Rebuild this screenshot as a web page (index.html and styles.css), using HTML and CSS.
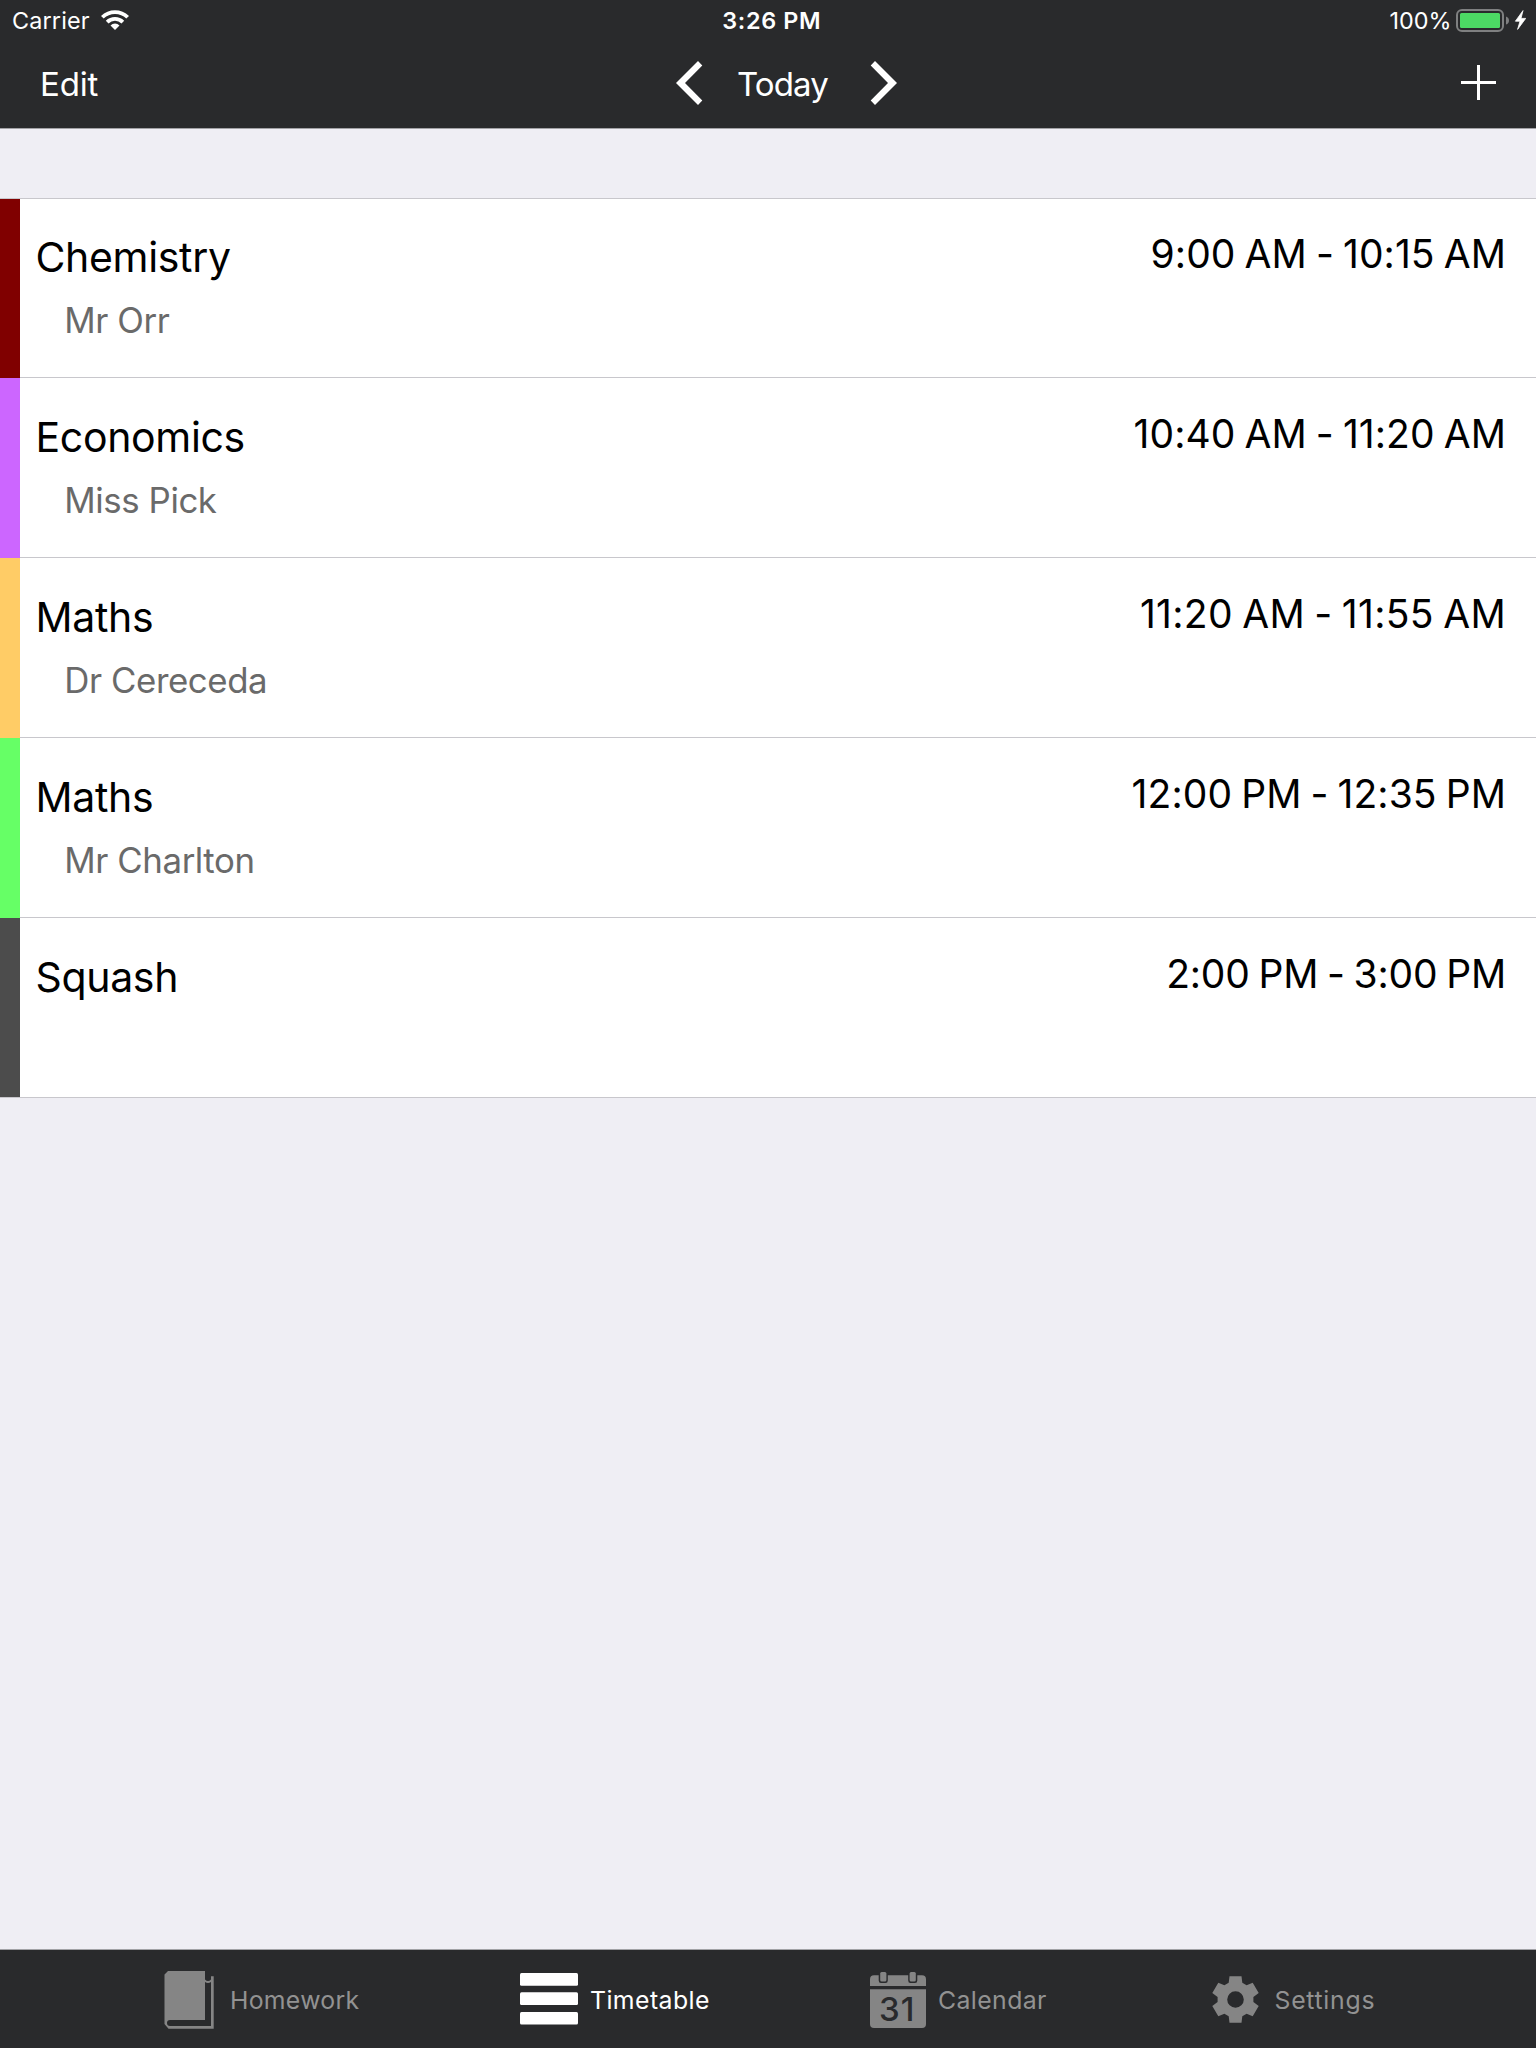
FILE: index.html
```html
<!DOCTYPE html>
<html lang="en">
<head>
<meta charset="utf-8">
<title>Timetable</title>
<link rel="stylesheet" href="styles.css">
</head>
<body>
<div class="app">
  <header class="header">
    <div class="status">
      <div class="status-left">
        <span class="carrier">Carrier</span>
        <svg class="wifi" width="28" height="20" viewBox="0 0 28 20">
          <path d="M0 5.9A20 20 0 0 1 28 5.9L25.3 8.6A16.2 16.2 0 0 0 2.7 8.6Z"/>
          <path d="M4.8 10.7A13.2 13.2 0 0 1 23.2 10.7L20.5 13.4A9.4 9.4 0 0 0 7.5 13.4Z"/>
          <path d="M9.5 15.4A6.5 6.5 0 0 1 18.5 15.4L14 20Z"/>
        </svg>
      </div>
      <span class="clock">3:26 PM</span>
      <div class="status-right">
        <span>100%</span>
        <svg class="battery" width="70" height="24" viewBox="0 0 70 24">
          <rect class="battery-case" x="1" y="1" width="46" height="21" rx="5"/>
          <rect class="battery-level" x="4" y="4" width="40" height="15" rx="1.5"/>
          <path class="battery-tip" d="M50 7.5Q53 8.5 53 11.5T50 15.5Z"/>
          <path class="bolt" d="M67 1.6L59.4 12.2H64L61.6 20.4L69.7 9.4H65Z"/>
        </svg>
      </div>
    </div>
    <nav class="nav">
      <span class="edit">Edit</span>
      <div class="day">
        <svg width="27" height="44" viewBox="0 0 27 44"><path d="M22 0L26.3 4.5L9 22L26.3 39.5L22 44L0 22Z"/></svg>
        <span class="day-name">Today</span>
        <svg width="27" height="44" viewBox="0 0 27 44"><path d="M5 0L.7 4.5L18 22L.7 39.5L5 44L27 22Z"/></svg>
      </div>
      <svg class="plus" width="35" height="35" viewBox="0 0 35 35"><path d="M0 16H16V0H19V16H35V19H19V35H16V19H0Z"/></svg>
    </nav>
  </header>

  <main class="content">
    <ul class="lessons">
      <li class="lesson">
        <span class="stripe chemistry"></span>
        <div class="body">
          <div class="info"><div class="subject">Chemistry</div><div class="teacher">Mr Orr</div></div>
          <div class="time">9:00 AM - 10:15 AM</div>
        </div>
      </li>
      <li class="lesson">
        <span class="stripe economics"></span>
        <div class="body">
          <div class="info"><div class="subject">Economics</div><div class="teacher">Miss Pick</div></div>
          <div class="time">10:40 AM - 11:20 AM</div>
        </div>
      </li>
      <li class="lesson">
        <span class="stripe maths-a"></span>
        <div class="body">
          <div class="info"><div class="subject">Maths</div><div class="teacher">Dr Cereceda</div></div>
          <div class="time loose">11:20 AM - 11:55 AM</div>
        </div>
      </li>
      <li class="lesson">
        <span class="stripe maths-b"></span>
        <div class="body">
          <div class="info"><div class="subject">Maths</div><div class="teacher">Mr Charlton</div></div>
          <div class="time">12:00 PM - 12:35 PM</div>
        </div>
      </li>
      <li class="lesson">
        <span class="stripe squash"></span>
        <div class="body">
          <div class="info"><div class="subject">Squash</div></div>
          <div class="time tight">2:00 PM - 3:00 PM</div>
        </div>
      </li>
    </ul>
  </main>

  <footer class="tabs">
    <div class="tab homework">
      <svg width="50" height="58" viewBox="0 0 50 58"><path fill-rule="evenodd" d="M4 0H41V8.5Q44 11.5 47 8.5V5.3H49.7V57.7H4.5L.5 53V3.5ZM41 11Q44 13 47 11V55H6A3 3 0 0 1 6 49H41Z"/></svg>
      <span>Homework</span>
    </div>
    <div class="tab timetable">
      <svg width="58" height="52" viewBox="0 0 58 52"><rect width="58" height="12.7" rx="1.5"/><rect y="19.3" width="58" height="12.7" rx="1.5"/><rect y="38.9" width="58" height="12.7" rx="1.5"/></svg>
      <span>Timetable</span>
    </div>
    <div class="tab calendar">
      <svg width="56" height="56" viewBox="0 0 56 56">
        <path d="M4 3.3H8.7V8.5Q8.7 11 11 11H15.5Q17.8 11 17.8 8.5V3.3H38.2V8.5Q38.2 11 40.5 11H45Q47.3 11 47.3 8.5V3.3H52Q56 3.3 56 7.3V14H0V7.3Q0 3.3 4 3.3Z"/>
        <rect x="10.2" width="6.2" height="9.6" rx="1.5"/><rect x="39.6" width="6.2" height="9.6" rx="1.5"/>
        <path d="M0 17.3H56V52Q56 56 52 56H4Q0 56 0 52Z"/>
        <text class="date" x="9" y="48.7">31</text>
      </svg>
      <span>Calendar</span>
    </div>
    <div class="tab settings">
      <svg width="47" height="47" viewBox="-23.5 -23.5 47 47"><path fill-rule="evenodd" d="M-6.8-16.8L-6-23.3L6-23.3L6.8-16.8L11.1-14.3L17.2-16.8L23.2-6.5L17.9-2.5L17.9 2.5L23.2 6.5L17.2 16.8L11.1 14.3L6.8 16.8L6 23.3L-6 23.3L-6.8 16.8L-11.1 14.3L-17.2 16.8L-23.2 6.5L-17.9 2.5L-17.9-2.5L-23.2-6.5L-17.2-16.8L-11.1-14.3ZM-8.3 0A8.3 8.3 0 0 0 8.3 0A8.3 8.3 0 0 0-8.3 0Z"/></svg>
      <span>Settings</span>
    </div>
  </footer>
</div>
</body>
</html>
```
FILE: styles.css
```css
* { box-sizing: border-box; }
body { margin: 0; font-family: Inter, "Liberation Sans", sans-serif; color: #000; }
svg { display: block; flex: none; fill: currentColor; }
span { white-space: nowrap; }

.app { width: 1536px; height: 2048px; display: flex; flex-direction: column; background: #efeef4; overflow: hidden; }

.header { height: 129px; background: #292a2c; color: #fff; border-bottom: 1px solid #a2a2a6; }
.status { height: 40px; display: flex; font-size: 23.4px; line-height: 41px; }
.status-left { width: 722.3px; padding-left: 12px; display: flex; }
.carrier { letter-spacing: .15px; }
.wifi { margin: 10px 0 0 11px; }
.clock { font-weight: 600; letter-spacing: .65px; }
.status-right { margin-left: auto; padding-right: 10px; display: flex; }
.battery { margin: 9px 0 0 4.5px; }
.battery-case { fill: none; stroke: #7f8081; stroke-width: 2; }
.battery-level { fill: #4cd964; }
.battery-tip { fill: #7f8081; }
.bolt { stroke: #fff; stroke-width: .8; }

.nav { height: 88px; padding: 0 40px; display: flex; align-items: center; font-size: 33px; line-height: 40px; }
.edit { width: 636px; letter-spacing: -.2px; }
.day { display: flex; align-items: center; width: 221px; }
.day svg { margin-top: -2px; }
.day-name { width: 166.5px; padding-left: 34px; letter-spacing: -.9px; }
.plus { margin: -3px 0 0 auto; }

.content { flex: 1; padding-top: 69px; }
.lessons { margin: 0; padding: 0; list-style: none; }
.lesson { height: 180px; display: flex; background: #fff; }
.lesson:first-child { border-top: 1px solid #c8c7cc; }
.lesson:last-child { border-bottom: 1px solid #c8c7cc; }
.stripe { width: 20px; }
.body { flex: 1; display: flex; justify-content: space-between; padding: 34px 30px 0 15.5px; border-bottom: 1px solid #c8c7cc; }
.lesson:first-child .body { padding-top: 33px; }
.lesson:last-child .body { border-bottom: 0; }
.subject { font-size: 41px; line-height: 50px; letter-spacing: -.33px; }
.teacher { margin: 16px 0 0 28.8px; font-size: 34.8px; line-height: 44px; letter-spacing: -.42px; color: #6a6a6a; }
.time { margin-top: -2px; font-size: 39px; line-height: 48px; letter-spacing: .08px; word-spacing: -2px; white-space: nowrap; }
.time.tight { letter-spacing: -.18px; }
.time.loose { letter-spacing: .33px; }
.chemistry { background: #800000; }
.economics { background: #cc66ff; }
.maths-a { background: #ffcc66; }
.maths-b { background: #66ff66; }
.squash { background: #4c4c4c; }

.tabs { height: 99px; padding-left: 164px; display: grid; grid-template-columns: 356px 350px 342px 1fr; background: #292a2c; border-top: 1px solid #a2a2a6; font-size: 24.8px; line-height: 100px; color: #929292; }
.tab { display: flex; align-items: flex-start; }
.tab svg { color: #858585; }
.homework { gap: 16px; letter-spacing: .28px; }
.homework svg { margin-top: 21px; }
.timetable { gap: 12px; letter-spacing: .43px; color: #fff; }
.timetable svg { margin-top: 23px; color: #fff; }
.calendar { gap: 12px; }
.calendar span { letter-spacing: .4px; }
.calendar svg { margin-top: 22px; }
.settings { gap: 15.5px; letter-spacing: .72px; }
.settings svg { margin-top: 26px; }
.date { font-size: 33px; font-weight: 500; letter-spacing: 1px; fill: #292a2c; }
```
